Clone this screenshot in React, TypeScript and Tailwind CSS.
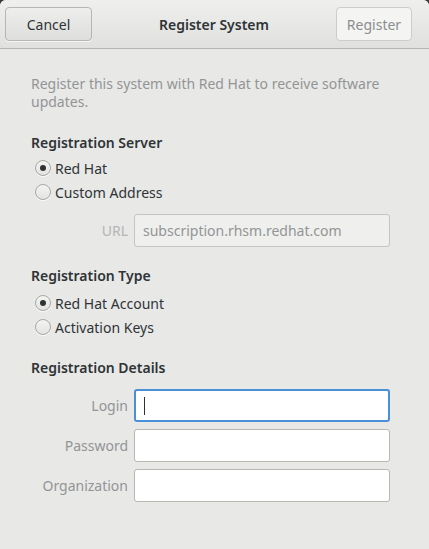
import React from 'react';

const Radio = ({ checked, label }: { checked?: boolean; label: string }) => (
  <div className="flex items-center h-6">
    <span className="ml-[4px] w-[16px] h-[16px] rounded-full border border-[#a8a8a5] bg-gradient-to-b from-[#f4f4f3] to-[#e3e3e1] flex items-center justify-center shadow-[0_1px_0_rgba(255,255,255,0.8)]">
      {checked && <span className="w-[6px] h-[6px] rounded-full bg-[#2e3436]" />}
    </span>
    <span className="ml-[4px] text-[#2e3436]">{label}</span>
  </div>
);

const Field = ({ label, focused }: { label: string; focused?: boolean }) => (
  <div className="flex items-center gap-[6px]">
    <span className="w-[97px] text-right text-[#929595]">{label}</span>
    <div
      className={`w-[256px] h-[33px] rounded-[3px] bg-white flex items-center px-[8px] ${
        focused ? 'border-2 border-[#4a90d9]' : 'border border-[#b6b6b3]'
      }`}
    >
      {focused && <span className="w-px h-[18px] bg-[#2e3436]" />}
    </div>
  </div>
);

export default function App() {
  return (
    <div
      className="w-[429px] h-[549px] bg-[#3a3a3a] text-[14px]"
      style={{ fontFamily: '"Noto Sans", "Open Sans", sans-serif' }}
    >
      <div className="w-full h-full bg-[#e8e8e7] rounded-t-[6px] overflow-hidden flex flex-col">
        {/* Header */}
        <div className="h-[49px] shrink-0 flex items-center justify-between px-[5px] border-b border-[#b6b6b3] bg-gradient-to-b from-[#efefee] to-[#e0e0de]">
          <button className="w-[87px] h-[34px] rounded-[4px] border border-[#b6b6b3] bg-gradient-to-b from-[#eeeeec] to-[#dededc] text-[#2e3436] shadow-[0_1px_0_rgba(255,255,255,0.7)]">
            Cancel
          </button>
          <div className="font-semibold text-[#2e3436]">Register System</div>
          <button className="mr-[12px] w-[76px] h-[34px] rounded-[4px] border border-[#cdcdca] bg-[#f4f4f2] text-[#8b8e8f]">
            Register
          </button>
        </div>

        {/* Content */}
        <div className="px-[31px] pt-[26px]">
          <p className="text-[#929595] leading-[18px]">
            Register this system with Red Hat to receive software updates.
          </p>

          <h3 className="mt-[21px] font-semibold text-[#2e3436]">Registration Server</h3>
          <div className="mt-[3px]">
            <Radio checked label="Red Hat" />
            <Radio label="Custom Address" />
          </div>
          <div className="mt-[10px] flex items-center gap-[6px]">
            <span className="w-[97px] text-right text-[#b4b5b5]">URL</span>
            <div className="w-[256px] h-[33px] rounded-[3px] border border-[#c4c4c1] bg-[#efefee] flex items-center px-[8px] text-[#929595]">
              subscription.rhsm.redhat.com
            </div>
          </div>

          <h3 className="mt-[18px] font-semibold text-[#2e3436]">Registration Type</h3>
          <div className="mt-[5px]">
            <Radio checked label="Red Hat Account" />
            <Radio label="Activation Keys" />
          </div>

          <h3 className="mt-[18px] font-semibold text-[#2e3436]">Registration Details</h3>
          <div className="mt-[11px] flex flex-col gap-[7px]">
            <Field label="Login" focused />
            <Field label="Password" />
            <Field label="Organization" />
          </div>
        </div>
      </div>
    </div>
  );
}
